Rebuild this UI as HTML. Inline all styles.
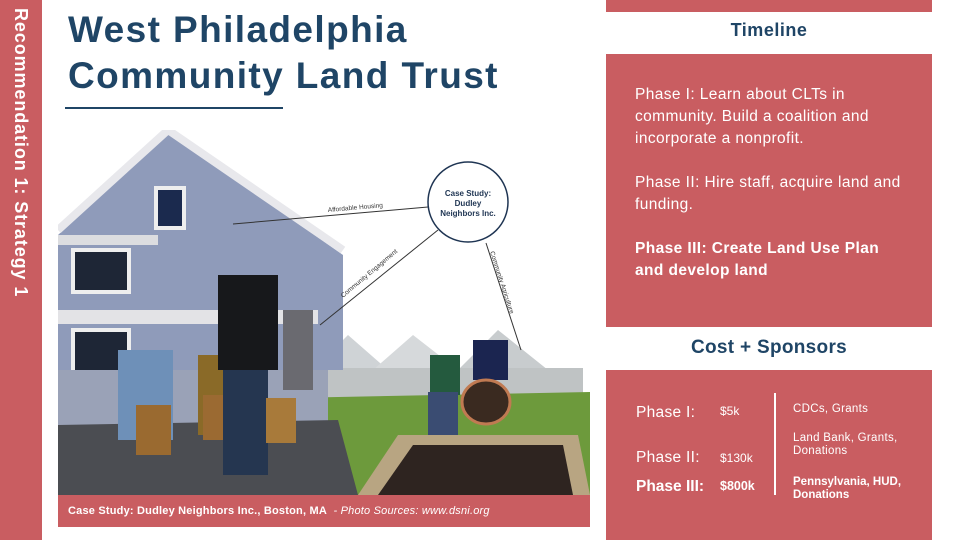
<!DOCTYPE html>
<html><head><meta charset="utf-8"><style>
*{margin:0;padding:0;box-sizing:border-box}
body{width:960px;height:540px;background:#fff;position:relative;overflow:hidden;font-family:"Liberation Sans",sans-serif}
.red{background:#c95d61}
.abs{position:absolute}
.navy{color:#1f4566}
.vt{position:absolute;left:0;top:0;width:42px;height:540px;background:#c95d61}
.vt span{position:absolute;left:31px;top:8px;transform-origin:0 0;transform:rotate(90deg);white-space:nowrap;color:#fff;font-weight:bold;font-size:18px;letter-spacing:0.9px}
.tl{color:#fff;font-size:15.5px;line-height:22px;letter-spacing:0.4px}
</style></head><body>
<div class="vt"><span>Recommendation 1: Strategy 1</span></div>
<div class="abs navy" style="left:68px;top:7px;font-size:37px;font-weight:bold;line-height:46px;letter-spacing:1.4px">West Philadelphia<br>Community Land Trust</div>
<div class="abs" style="left:65px;top:107px;width:218px;height:2px;background:#1f4566"></div>

<svg class="abs" style="left:58px;top:130px" width="532" height="365" viewBox="0 0 532 365">
<rect width="532" height="365" fill="#fff"/>
<polygon points="255,240 290,205 330,240" fill="#cfd3d6"/>
<polygon points="315,240 355,205 400,240" fill="#d6d9db"/>
<polygon points="400,240 440,200 490,240" fill="#c8ccce"/>
<rect x="255" y="238" width="270" height="30" fill="#bfc3c4"/>
<polygon points="230,268 532,262 532,365 250,365" fill="#6d9a3c"/>
<polygon points="0,105 110,2 285,125 285,240 0,240" fill="#8f9bba"/>
<polyline points="0,100 110,0 285,120" fill="none" stroke="#e8e8ec" stroke-width="8"/>
<rect x="0" y="105" width="100" height="10" fill="#dcdde0"/>
<rect x="0" y="180" width="260" height="14" fill="#e3e3e6"/>
<rect x="98" y="58" width="28" height="40" fill="#1b2a4e" stroke="#eee" stroke-width="4"/>
<rect x="15" y="120" width="56" height="42" fill="#1e2636" stroke="#eee" stroke-width="4"/>
<rect x="15" y="200" width="56" height="44" fill="#1e2636" stroke="#eee" stroke-width="4"/>
<rect x="0" y="240" width="270" height="60" fill="#9aa2b7"/>
<polygon points="0,295 280,290 300,365 0,365" fill="#4b4d52"/>
<rect x="60" y="220" width="55" height="90" fill="#6e90b8"/>
<rect x="78" y="275" width="35" height="50" fill="#9a6a30"/>
<rect x="140" y="225" width="40" height="80" fill="#8a6a28"/>
<rect x="145" y="265" width="30" height="45" fill="#9b6a32"/>
<rect x="160" y="145" width="60" height="95" fill="#17181b"/>
<rect x="165" y="240" width="45" height="105" fill="#253650"/>
<rect x="225" y="180" width="30" height="80" fill="#6a6a70"/>
<rect x="208" y="268" width="30" height="45" fill="#a87a3a"/>
<rect x="372" y="225" width="30" height="40" fill="#245a3e"/>
<rect x="370" y="262" width="30" height="45" fill="#3a4c72"/>
<rect x="415" y="210" width="35" height="40" fill="#1b2550"/>
<ellipse cx="428" cy="272" rx="24" ry="22" fill="#3a2a20" stroke="#c07a52" stroke-width="3"/>
<polygon points="300,365 340,305 520,305 532,365" fill="#b8a582"/>
<polygon points="320,365 355,315 505,315 515,365" fill="#2e2420"/>
<line x1="175" y1="94" x2="370" y2="77" stroke="#333" stroke-width="1"/>
<line x1="262" y1="195" x2="380" y2="100" stroke="#333" stroke-width="1"/>
<line x1="428" y1="113" x2="463" y2="220" stroke="#333" stroke-width="1"/>
<circle cx="410" cy="72" r="40" fill="#fff" stroke="#1f3553" stroke-width="1.5"/>
<text x="410" y="66" font-size="8" font-weight="bold" text-anchor="middle" fill="#1f3553" font-family="Liberation Sans">Case Study:</text>
<text x="410" y="76" font-size="8" font-weight="bold" text-anchor="middle" fill="#1f3553" font-family="Liberation Sans">Dudley</text>
<text x="410" y="86" font-size="8" font-weight="bold" text-anchor="middle" fill="#1f3553" font-family="Liberation Sans">Neighbors Inc.</text>
<text x="270" y="82" font-size="6.5" fill="#333" transform="rotate(-5 270 82)" font-family="Liberation Sans">Affordable Housing</text>
<text x="285" y="168" font-size="6.5" fill="#333" transform="rotate(-40 285 168)" font-family="Liberation Sans">Community Engagement</text>
<text x="432" y="122" font-size="6.5" fill="#333" transform="rotate(72 432 122)" font-family="Liberation Sans">Community Agriculture</text>
</svg>

<div class="abs red" style="left:58px;top:495px;width:532px;height:32px;color:#fff;font-size:11px;line-height:32px;padding-left:10px;letter-spacing:0.2px"><b>Case Study: Dudley Neighbors Inc., Boston, MA</b> &nbsp;<i>- Photo Sources: www.dsni.org</i></div>

<div class="abs red" style="left:606px;top:0;width:326px;height:12px"></div>
<div class="abs navy" style="left:606px;top:20px;width:326px;text-align:center;font-size:18px;font-weight:bold;letter-spacing:0.5px">Timeline</div>
<div class="abs red" style="left:606px;top:54px;width:326px;height:273px"></div>
<div class="abs tl" style="left:635px;top:84px;width:275px">Phase I: Learn about CLTs in community. Build a coalition and incorporate a nonprofit.<br><br>Phase II: Hire staff, acquire land and funding.<br><br><b>Phase III: Create Land Use Plan and develop land</b></div>
<div class="abs navy" style="left:606px;top:337px;width:326px;text-align:center;font-size:19px;font-weight:bold;letter-spacing:0.3px">Cost + Sponsors</div>
<div class="abs red" style="left:606px;top:370px;width:326px;height:170px"></div>
<div class="abs" style="left:774px;top:393px;width:2px;height:102px;background:#fff"></div>
<div class="abs" style="color:#fff;left:636px;top:404px;font-size:15.5px;letter-spacing:0.3px">Phase I:</div>
<div class="abs" style="color:#fff;left:720px;top:404px;font-size:12px">$5k</div>
<div class="abs" style="color:#fff;left:636px;top:449px;font-size:15.5px;letter-spacing:0.3px">Phase II:</div>
<div class="abs" style="color:#fff;left:720px;top:451px;font-size:12px">$130k</div>
<div class="abs" style="color:#fff;left:636px;top:478px;font-size:15.5px;font-weight:bold">Phase III:</div>
<div class="abs" style="color:#fff;left:720px;top:479px;font-size:12.5px;font-weight:bold">$800k</div>
<div class="abs" style="color:#fff;left:793px;top:403px;font-size:11.5px;letter-spacing:0.3px">CDCs, Grants</div>
<div class="abs" style="color:#fff;left:793px;top:432px;font-size:11.5px;line-height:13px;letter-spacing:0.3px">Land Bank, Grants,<br>Donations</div>
<div class="abs" style="color:#fff;left:793px;top:476px;font-size:11.5px;line-height:13px;font-weight:bold">Pennsylvania, HUD,<br>Donations</div>
</body></html>
